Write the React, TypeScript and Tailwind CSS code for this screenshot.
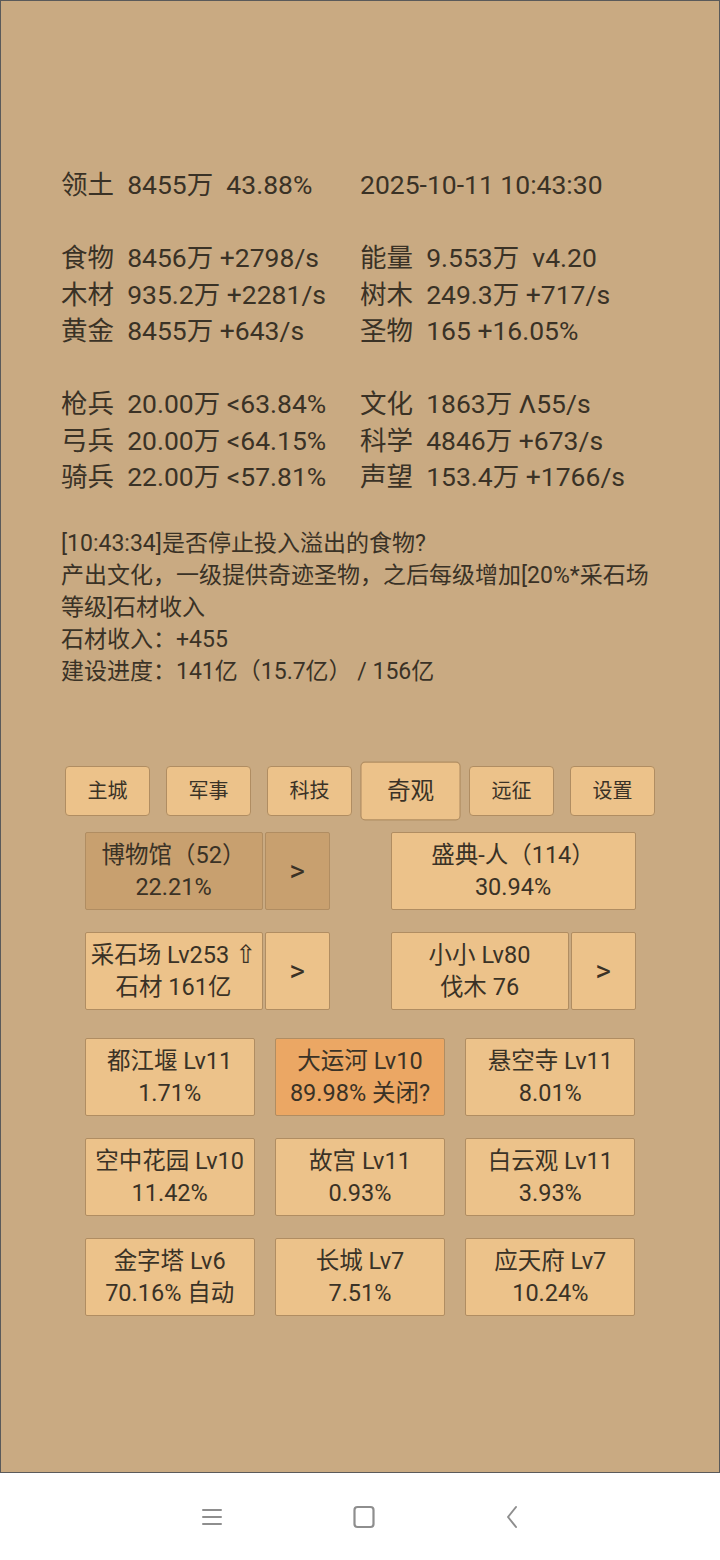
import React from "react";

const FONT = "font-['Roboto','Noto_Sans_CJK_SC',sans-serif]";

const stats: [string, string][][] = [
  [["领土", "8455万  43.88%"], ["", "2025-10-11 10:43:30"]],
  [],
  [["食物", "8456万 +2798/s"], ["能量", "9.553万  v4.20"]],
  [["木材", "935.2万 +2281/s"], ["树木", "249.3万 +717/s"]],
  [["黄金", "8455万 +643/s"], ["圣物", "165 +16.05%"]],
  [],
  [["枪兵", "20.00万 <63.84%"], ["文化", "1863万 Λ55/s"]],
  [["弓兵", "20.00万 <64.15%"], ["科学", "4846万 +673/s"]],
  [["骑兵", "22.00万 <57.81%"], ["声望", "153.4万 +1766/s"]],
];

const tabs = ["主城", "军事", "科技", "奇观", "远征", "设置"];

const wonders = [
  { name: "都江堰 Lv11", sub: "1.71%" },
  { name: "大运河 Lv10", sub: "89.98% 关闭?", hot: true },
  { name: "悬空寺 Lv11", sub: "8.01%" },
  { name: "空中花园 Lv10", sub: "11.42%" },
  { name: "故宫 Lv11", sub: "0.93%" },
  { name: "白云观 Lv11", sub: "3.93%" },
  { name: "金字塔 Lv6", sub: "70.16% 自动" },
  { name: "长城 Lv7", sub: "7.51%" },
  { name: "应天府 Lv7", sub: "10.24%" },
];

function StatCell({ cell }: { cell: [string, string] }) {
  const [label, value] = cell;
  return (
    <span className="whitespace-pre">
      {label ? `${label}  ${value}` : value}
    </span>
  );
}

function Box({
  children,
  className = "",
}: {
  children: React.ReactNode;
  className?: string;
}) {
  return (
    <div
      className={
        "h-[78px] flex flex-col items-center justify-center border border-[#b08d62] rounded-[2px] text-[23.5px] leading-[32px] whitespace-nowrap " +
        className
      }
    >
      {children}
    </div>
  );
}

function Arrow({ dark = false }: { dark?: boolean }) {
  return (
    <Box className={"w-[65px] text-[30px] " + (dark ? "bg-[#c8a06f]" : "bg-[#ecc28a]")}>
      &gt;
    </Box>
  );
}

export default function App() {
  return (
    <div className={`w-[720px] h-[1560px] bg-white text-[#3a3226] ${FONT}`}>
      <div className="h-[1473px] bg-[#c9aa82] border border-[#5a5a5a] flex flex-col">
        {/* stats */}
        <div className="mt-[166px] pl-[60px] text-[26.5px] leading-[36.5px]">
          {stats.map((row, i) =>
            row.length === 0 ? (
              <div key={i} className="h-[36.5px]" />
            ) : (
              <div key={i} className="flex">
                <div className="w-[299px]">
                  <StatCell cell={row[0]} />
                </div>
                <StatCell cell={row[1]} />
              </div>
            )
          )}
        </div>

        {/* message */}
        <div className="mt-[32px] pl-[60px] w-[664px] text-[23px] leading-[32px]">
          <p>[10:43:34]是否停止投入溢出的食物?</p>
          <p>产出文化，一级提供奇迹圣物，之后每级增加[20%*采石场等级]石材收入</p>
          <p>石材收入：+455</p>
          <p>建设进度：141亿（15.7亿） / 156亿</p>
        </div>

        {/* tabs */}
        <div className="mt-[78px] flex justify-center">
          {tabs.map((t) => (
            <button
              key={t}
              className={
                "mx-2 w-[85px] h-[50px] bg-[#ecc28a] border border-[#b08d62] rounded-[4px] text-[20px] text-[#3a3226] " +
                (t === "奇观" ? "scale-[1.18]" : "")
              }
            >
              {t}
            </button>
          ))}
        </div>

        <div className="mx-auto w-[551px]">
          {/* featured row */}
          <div className="mt-[16px] flex justify-between">
            <div className="w-[245px] flex gap-[2px]">
              <Box className="w-[178px] bg-[#c8a06f]">
                <span>博物馆（52）</span>
                <span>22.21%</span>
              </Box>
              <Arrow dark />
            </div>
            <div className="w-[245px] flex">
              <Box className="w-full bg-[#ecc28a]">
                <span>盛典-人（114）</span>
                <span>30.94%</span>
              </Box>
            </div>
          </div>

          {/* resource row */}
          <div className="mt-[22px] flex justify-between">
            <div className="w-[245px] flex gap-[2px]">
              <Box className="w-[178px] bg-[#ecc28a]">
                <span className="flex items-center gap-[6px]">
                  采石场 Lv253
                  <span className="font-['DejaVu_Sans',sans-serif] text-[25px] leading-none">⇧</span>
                </span>
                <span>石材 161亿</span>
              </Box>
              <Arrow />
            </div>
            <div className="w-[245px] flex gap-[2px]">
              <Box className="w-[178px] bg-[#ecc28a]">
                <span>小小 Lv80</span>
                <span>伐木 76</span>
              </Box>
              <Arrow />
            </div>
          </div>

          {/* wonders */}
          <div className="mt-[28px] grid grid-cols-3 gap-x-5 gap-y-[22px]">
            {wonders.map((w) => (
              <Box
                key={w.name}
                className={w.hot ? "bg-[#eba764]" : "bg-[#ecc28a]"}
              >
                <span>{w.name}</span>
                <span>{w.sub}</span>
              </Box>
            ))}
          </div>
        </div>
      </div>

      {/* system nav bar */}
      <div className="h-[87px] flex items-center justify-center gap-[128px]">
        <svg width="24" height="20" viewBox="0 0 24 20" fill="none" stroke="#8e8e8e" strokeWidth="2" strokeLinecap="round">
          <path d="M3 3h18M3 10h18M3 17h18" />
        </svg>
        <svg width="24" height="24" viewBox="0 0 24 24" fill="none" stroke="#8e8e8e" strokeWidth="2.2">
          <rect x="2.5" y="2" width="19" height="20" rx="3" />
        </svg>
        <svg width="16" height="24" viewBox="0 0 16 24" fill="none" stroke="#8e8e8e" strokeWidth="2" strokeLinecap="round" strokeLinejoin="round">
          <path d="M12 2L4 12l8 10" />
        </svg>
      </div>
    </div>
  );
}
